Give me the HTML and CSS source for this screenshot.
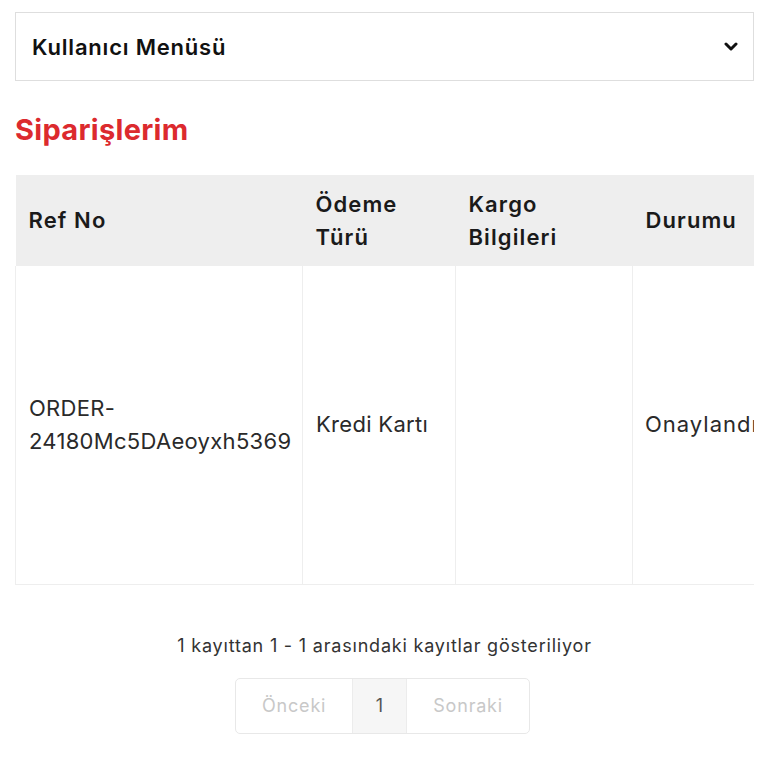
FILE: index.html
```html
<!DOCTYPE html>
<html lang="tr">
<head>
<meta charset="utf-8">
<title>Siparişlerim</title>
<link rel="stylesheet" href="styles.css">
</head>
<body>
<div class="page">
  <div class="dropdown">
    <span class="dropdown-label">Kullanıcı Menüsü</span>
    <svg class="chevron" width="14" height="10" viewBox="0 0 14 10"><polyline points="2,2 7,7 12,2" fill="none" stroke="#111" stroke-width="3" stroke-linecap="round" stroke-linejoin="round"/></svg>
  </div>

  <h1 class="title">Siparişlerim</h1>

  <div class="table-wrap">
    <table class="orders">
      <thead>
        <tr>
          <th class="c-ref">Ref No</th>
          <th class="c-pay">Ödeme<br>Türü</th>
          <th class="c-cargo">Kargo<br>Bilgileri</th>
          <th class="c-status">Durumu</th>
          <th class="c-extra"></th>
        </tr>
      </thead>
      <tbody>
        <tr>
          <td>ORDER-<br>24180Mc5DAeoyxh5369</td>
          <td>Kredi Kartı</td>
          <td></td>
          <td class="t-status">Onaylandı</td>
          <td></td>
        </tr>
      </tbody>
    </table>
  </div>

  <p class="info">1 kayıttan 1 - 1 arasındaki kayıtlar gösteriliyor</p>

  <div class="pager-row">
    <div class="pager">
      <span class="pg pg-disabled">Önceki</span>
      <span class="pg pg-current">1</span>
      <span class="pg pg-disabled">Sonraki</span>
    </div>
  </div>
</div>
</body>
</html>
```

FILE: styles.css
```css
* { box-sizing: border-box; }
html, body { margin: 0; padding: 0; background: #fff; }
body {
  font-family: Inter, "DejaVu Sans", sans-serif;
  color: #222;
}
.page {
  padding: 12px 14px 0 15px;
  width: 768px;
  overflow: hidden;
}
.dropdown {
  height: 69px;
  border: 1px solid #dedede;
  display: flex;
  align-items: center;
  justify-content: space-between;
  padding: 0 15px 0 16px;
}
.dropdown-label {
  font-size: 22px;
  font-weight: 600;
  color: #111;
  letter-spacing: 0.8px;
}
.chevron { display: block; }
.title {
  margin: 31px 0 27px 0;
  font-size: 29px;
  font-weight: 700;
  color: #dc2a2e;
  line-height: 36px;
  letter-spacing: 0.3px;
}
.table-wrap {
  width: 739px;
  overflow: hidden;
}
.orders {
  border-collapse: collapse;
  table-layout: fixed;
  width: 900px;
}
.orders th, .orders td {
  text-align: left;
  vertical-align: middle;
  padding: 0 8px 0 13px;
  font-size: 22px;
  line-height: 33px;
  white-space: nowrap;
}
.orders th {
  background: #eeeeee;
  height: 91px;
  font-weight: 600;
  color: #1a1a1a;
  letter-spacing: 1.1px;
}
.orders td {
  height: 318px;
  font-weight: 400;
  color: #2a2a2a;
  letter-spacing: 0.3px;
  border: 1px solid #eeeeee;
  border-top: none;
}
.orders td.t-status { letter-spacing: 1px; padding-left: 12px; }
.c-ref { width: 287px; }
.c-pay { width: 153px; }
.c-cargo { width: 177px; }
.c-status { width: 150px; }
.c-extra { width: 133px; }
.info {
  margin: 48px 0 0 0;
  text-align: center;
  font-size: 18px;
  line-height: 26px;
  color: #333;
  letter-spacing: 0.8px;
}
.pager-row {
  display: flex;
  justify-content: center;
  margin-top: 19px;
  padding-right: 4px;
}
.pager {
  display: flex;
  border: 1px solid #e8e8e8;
  border-radius: 5px;
  height: 56px;
  overflow: hidden;
}
.pg {
  display: flex;
  align-items: center;
  justify-content: center;
  font-size: 18px;
  letter-spacing: 0.8px;
  padding: 0 26px;
}
.pg-disabled { color: #c8c8c8; }
.pg-current {
  width: 55px;
  padding: 0;
  background: #f6f6f6;
  color: #555;
  border-left: 1px solid #ececec;
  border-right: 1px solid #ececec;
}
```
